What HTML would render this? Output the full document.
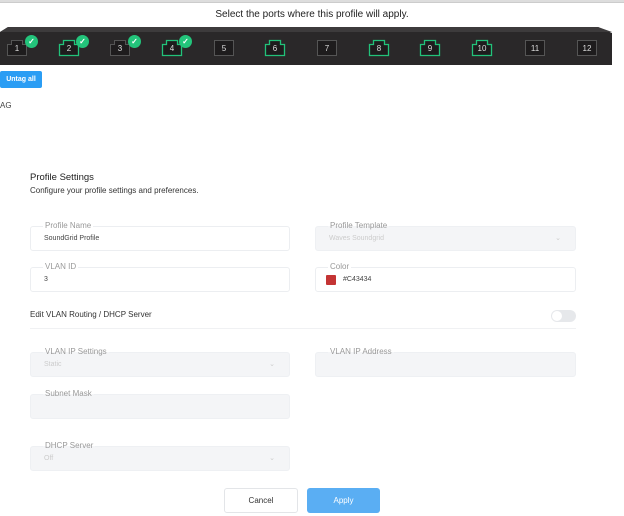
<!DOCTYPE html>
<html><head><style>
*{margin:0;padding:0;box-sizing:border-box}
body{width:624px;height:516px;background:#fff;font-family:"Liberation Sans",sans-serif;position:relative;overflow:hidden;color:#333}
.a{position:absolute}
.port{position:absolute;top:39px;width:22px;height:18px}
.port svg{position:absolute;left:0;top:0}
.port span{position:absolute;left:0;right:0;top:5px;text-align:center;color:#ddd;font-size:8px;line-height:10px}
.chk{position:absolute;top:35px;width:13px;height:13px;border-radius:50%;background:#23c47b;color:#fff;font-size:8px;line-height:13px;text-align:center;font-weight:bold}
.f{position:absolute;height:25px;border:1px solid #eceef1;border-radius:3px;background:#fff}
.f.d{background:#f4f5f7;border-color:#eef0f3}
.f .l{position:absolute;top:-6px;left:12px;background:#fff;padding:0 2px;font-size:8px;color:#999;line-height:10px}
.f.d .l{background:linear-gradient(#fff 50%,#f4f5f7 50%)}
.f .v{position:absolute;top:8px;left:13px;font-size:7px;color:#444}
.f.d .v{color:#ccc}
.f .c{position:absolute;right:14px;top:7px;font-size:7px;color:#ccc}
</style></head><body>
<div class="a" style="left:0;top:0;width:624px;height:3px;background:#ddd;border-bottom:1px solid #ccc"></div>
<div class="a" style="left:0;top:9px;width:624px;text-align:center;font-size:10px;color:#222">Select the ports where this profile will apply.</div>
<div class="a" style="left:0;top:27px;width:612px;height:38px;background:#2a2829;clip-path:polygon(0 5px,8px 0,598px 0,612px 6px,612px 38px,0 38px)"></div>
<div class="a" style="left:0;top:27px;width:612px;height:5px;background:#3d3b3c;clip-path:polygon(0 5px,8px 0,598px 0,612px 5px)"></div>

<div class="port" style="left:6px"><svg width="22" height="18"><path d="M1.5 5.5H5.5V1.5H16.5V5.5H20.5V16.5H1.5Z" fill="#1e1c1d" stroke="#555"/></svg><span>1</span></div><div class="chk" style="left:25px">✓</div>
<div class="port" style="left:58px"><svg width="22" height="18"><path d="M1.5 5.5H5.5V1.5H16.5V5.5H20.5V16.5H1.5Z" fill="#1e1c1d" stroke="#22c27a" stroke-width="1.3"/></svg><span>2</span></div><div class="chk" style="left:76px">✓</div>
<div class="port" style="left:109px"><svg width="22" height="18"><path d="M1.5 5.5H5.5V1.5H16.5V5.5H20.5V16.5H1.5Z" fill="#1e1c1d" stroke="#555"/></svg><span>3</span></div><div class="chk" style="left:128px">✓</div>
<div class="port" style="left:161px"><svg width="22" height="18"><path d="M1.5 5.5H5.5V1.5H16.5V5.5H20.5V16.5H1.5Z" fill="#1e1c1d" stroke="#22c27a" stroke-width="1.3"/></svg><span>4</span></div><div class="chk" style="left:179px">✓</div>
<div class="port" style="left:213px"><svg width="22" height="18"><rect x="1.5" y="1.5" width="19" height="15" fill="#1e1c1d" stroke="#555"/></svg><span>5</span></div>
<div class="port" style="left:264px"><svg width="22" height="18"><path d="M1.5 5.5H5.5V1.5H16.5V5.5H20.5V16.5H1.5Z" fill="#1e1c1d" stroke="#22c27a" stroke-width="1.3"/></svg><span>6</span></div>
<div class="port" style="left:316px"><svg width="22" height="18"><rect x="1.5" y="1.5" width="19" height="15" fill="#1e1c1d" stroke="#555"/></svg><span>7</span></div>
<div class="port" style="left:368px"><svg width="22" height="18"><path d="M1.5 5.5H5.5V1.5H16.5V5.5H20.5V16.5H1.5Z" fill="#1e1c1d" stroke="#22c27a" stroke-width="1.3"/></svg><span>8</span></div>
<div class="port" style="left:419px"><svg width="22" height="18"><path d="M1.5 5.5H5.5V1.5H16.5V5.5H20.5V16.5H1.5Z" fill="#1e1c1d" stroke="#22c27a" stroke-width="1.3"/></svg><span>9</span></div>
<div class="port" style="left:471px"><svg width="22" height="18"><path d="M1.5 5.5H5.5V1.5H16.5V5.5H20.5V16.5H1.5Z" fill="#1e1c1d" stroke="#22c27a" stroke-width="1.3"/></svg><span>10</span></div>
<div class="port" style="left:524px"><svg width="22" height="18"><rect x="1.5" y="1.5" width="19" height="15" fill="#1e1c1d" stroke="#555"/></svg><span>11</span></div>
<div class="port" style="left:576px"><svg width="22" height="18"><rect x="1.5" y="1.5" width="19" height="15" fill="#1e1c1d" stroke="#555"/></svg><span>12</span></div>

<div class="a" style="left:0;top:71px;width:42px;height:17px;background:#2a9df4;border-radius:2px;color:#fff;font-size:7px;font-weight:bold;line-height:17px;text-align:center">Untag all</div>
<div class="a" style="left:0;top:101px;font-size:8px;color:#444">AG</div>
<div class="a" style="left:30px;top:172px;font-size:9.5px;color:#222">Profile Settings</div>
<div class="a" style="left:30px;top:186px;font-size:8px;color:#333">Configure your profile settings and preferences.</div>
<div class="f" style="left:30px;top:226px;width:260px"><span class="l">Profile Name</span><span class="v">SoundGrid Profile</span></div>
<div class="f d" style="left:315px;top:226px;width:261px"><span class="l">Profile Template</span><span class="v">Waves Soundgrid</span><span class="c">⌄</span></div>
<div class="f" style="left:30px;top:267px;width:260px"><span class="l">VLAN ID</span><span class="v">3</span></div>
<div class="f" style="left:315px;top:267px;width:261px"><span class="l">Color</span><span class="a" style="left:10px;top:7px;width:10px;height:10px;background:#c43434;border-radius:1px"></span><span class="v" style="left:27px">#C43434</span></div>
<div class="a" style="left:30px;top:310px;font-size:8px;color:#333">Edit VLAN Routing / DHCP Server</div>
<div class="a" style="left:551px;top:310px;width:25px;height:12px;border-radius:6px;background:#e6e8eb"><div class="a" style="left:1px;top:1px;width:10px;height:10px;border-radius:50%;background:#fff"></div></div>
<div class="a" style="left:30px;top:328px;width:546px;height:1px;background:#f0f1f3"></div>
<div class="f d" style="left:30px;top:352px;width:260px"><span class="l">VLAN IP Settings</span><span class="v">Static</span><span class="c">⌄</span></div>
<div class="f d" style="left:315px;top:352px;width:261px"><span class="l">VLAN IP Address</span></div>
<div class="f d" style="left:30px;top:394px;width:260px"><span class="l">Subnet Mask</span></div>
<div class="f d" style="left:30px;top:446px;width:260px"><span class="l">DHCP Server</span><span class="v">Off</span><span class="c">⌄</span></div>
<div class="a" style="left:224px;top:488px;width:74px;height:25px;border:1px solid #e3e5e8;border-radius:3px;font-size:8px;line-height:23px;text-align:center;color:#333">Cancel</div>
<div class="a" style="left:307px;top:488px;width:73px;height:25px;background:#5aaef3;border-radius:3px;font-size:8px;line-height:25px;text-align:center;color:#fff">Apply</div>
</body></html>
